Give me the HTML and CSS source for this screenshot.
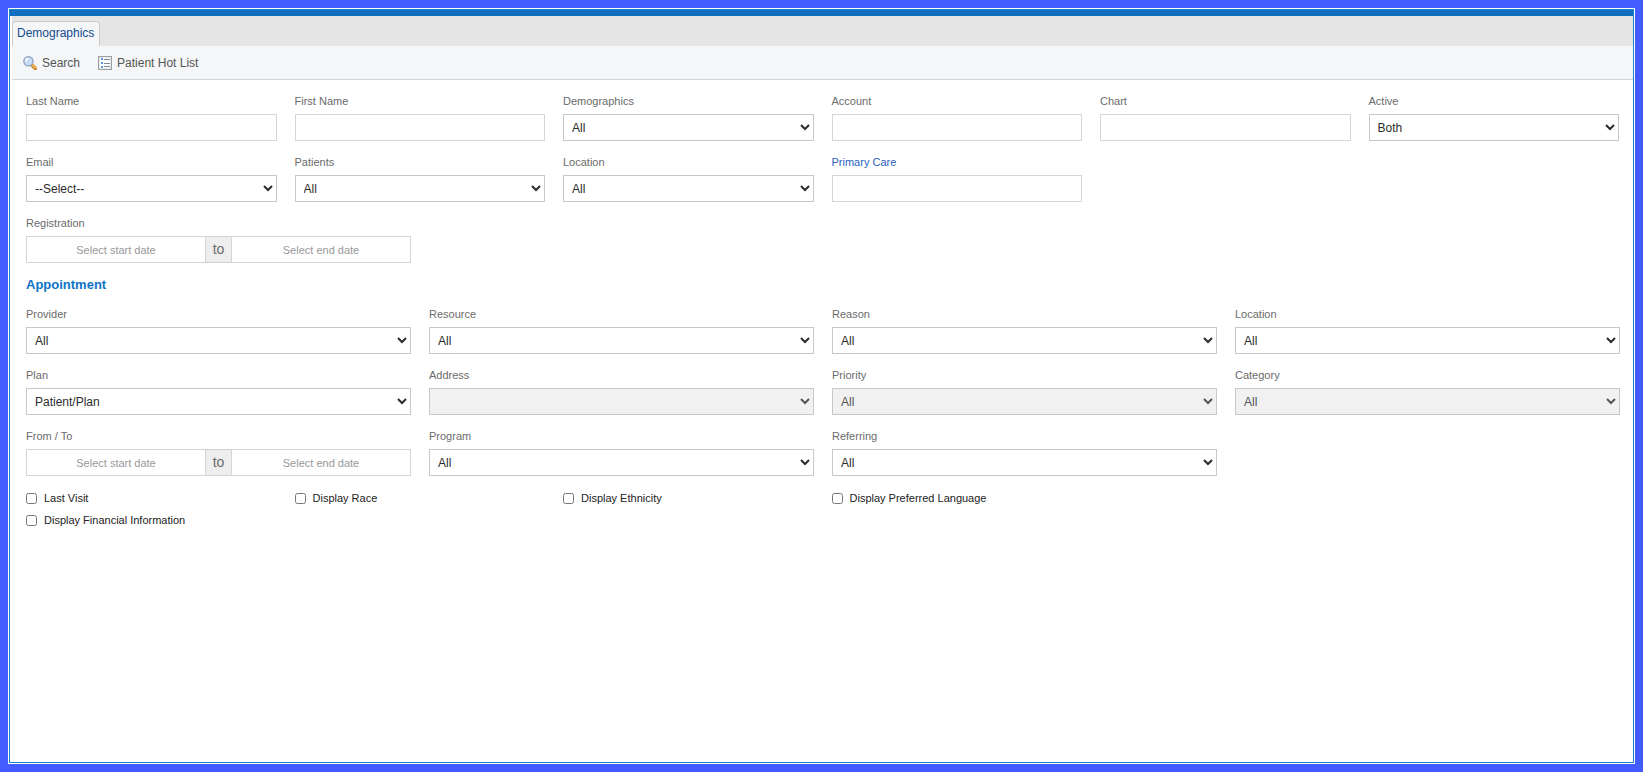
FILE: index.html
```html
<!DOCTYPE html>
<html lang="en">
<head>
<meta charset="utf-8">
<title>Demographics</title>
<link rel="stylesheet" href="styles.css">
</head>
<body>
<div class="window">
  <div class="title-bar"></div>
  <nav class="tabs"><button class="tab" type="button">Demographics</button></nav>
  <div class="toolbar">
    <button class="tool" type="button">
      <svg class="icon" viewBox="0 0 14 14" aria-hidden="true">
        <path d="M8.8 8.8 12.4 12.4" stroke="#c07f2c" stroke-width="3.6" stroke-linecap="round"/>
        <path d="M9.4 8.8 12.6 12" stroke="#f6b24a" stroke-width="2.2" stroke-linecap="round"/>
        <circle cx="5.4" cy="5.3" r="4.6" fill="#c5def7" stroke="#93a6c6" stroke-width="1.4"/>
        <path d="M2.8 5.2a2.8 2.8 0 0 1 2.8-2.7" fill="none" stroke="#fff" stroke-width="1.6"/>
      </svg>
      Search
    </button>
    <button class="tool" type="button">
      <svg class="icon" viewBox="0 0 14 14" aria-hidden="true">
        <rect x=".5" y=".5" width="13" height="13" fill="#fbfcfd" stroke="#9b9ea3" stroke-width="1.4"/>
        <path d="M3 3h2M3 7h2M3 11h2" stroke="#5a9ad6" stroke-width="2"/>
        <path d="M6 3.5h6M6 7.5h6M6 10.5h6" stroke="#83878c"/>
      </svg>
      Patient Hot List
    </button>
  </div>
  <form class="form">
    <div class="row six">
      <div class="field"><label for="last">Last Name</label><input class="control" id="last" type="text"></div>
      <div class="field"><label for="first">First Name</label><input class="control" id="first" type="text"></div>
      <div class="field"><label for="demo">Demographics</label><select class="control" id="demo"><option>All</option></select></div>
      <div class="field"><label for="account">Account</label><input class="control" id="account" type="text"></div>
      <div class="field"><label for="chart">Chart</label><input class="control" id="chart" type="text"></div>
      <div class="field"><label for="active">Active</label><select class="control" id="active"><option>Both</option></select></div>
    </div>
    <div class="row six">
      <div class="field"><label for="email">Email</label><select class="control" id="email"><option>--Select--</option></select></div>
      <div class="field"><label for="patients">Patients</label><select class="control" id="patients"><option>All</option></select></div>
      <div class="field"><label for="loc">Location</label><select class="control" id="loc"><option>All</option></select></div>
      <div class="field"><a class="lookup" id="care-label" href="#care">Primary Care</a><input class="control" id="care" type="text" aria-labelledby="care-label"></div>
    </div>
    <div class="row four">
      <div class="field"><label for="reg-start">Registration</label>
        <div class="range"><input class="control date" id="reg-start" type="text" placeholder="Select start date"><span class="to">to</span><input class="control date" type="text" placeholder="Select end date" aria-label="Registration end date"></div>
      </div>
    </div>
    <h2 class="heading">Appointment</h2>
    <div class="row four">
      <div class="field"><label for="provider">Provider</label><select class="control" id="provider"><option>All</option></select></div>
      <div class="field"><label for="resource">Resource</label><select class="control" id="resource"><option>All</option></select></div>
      <div class="field"><label for="reason">Reason</label><select class="control" id="reason"><option>All</option></select></div>
      <div class="field"><label for="aloc">Location</label><select class="control" id="aloc"><option>All</option></select></div>
    </div>
    <div class="row four">
      <div class="field"><label for="plan">Plan</label><select class="control" id="plan"><option>Patient/Plan</option></select></div>
      <div class="field"><label for="address">Address</label><select class="control" id="address" disabled></select></div>
      <div class="field"><label for="priority">Priority</label><select class="control" id="priority" disabled><option>All</option></select></div>
      <div class="field"><label for="category">Category</label><select class="control" id="category" disabled><option>All</option></select></div>
    </div>
    <div class="row four">
      <div class="field"><label for="from">From / To</label>
        <div class="range"><input class="control date" id="from" type="text" placeholder="Select start date"><span class="to">to</span><input class="control date" type="text" placeholder="Select end date" aria-label="Appointment end date"></div>
      </div>
      <div class="field"><label for="program">Program</label><select class="control" id="program"><option>All</option></select></div>
      <div class="field"><label for="referring">Referring</label><select class="control" id="referring"><option>All</option></select></div>
    </div>
    <div class="row six checks">
      <label class="check"><input type="checkbox">Last Visit</label>
      <label class="check"><input type="checkbox">Display Race</label>
      <label class="check"><input type="checkbox">Display Ethnicity</label>
      <label class="check"><input type="checkbox">Display Preferred Language</label>
      <label class="check full"><input type="checkbox">Display Financial Information</label>
    </div>
  </form>
</div>
</body>
</html>
```
FILE: styles.css
```css
* { box-sizing: border-box; }
body {
  margin: 0;
  padding: 8px;
  min-height: 100vh;
  display: flex;
  background: #425cff;
  font-family: "Liberation Sans", Arial, sans-serif;
  font-size: 12px;
}
button, input, select { font-family: inherit; font-size: inherit; }
.window {
  flex: 1;
  background: #fff;
  border: 1px solid #1c83cb;
  outline: 1px solid #fff;
  margin: 1px;
}
.title-bar { height: 6px; background: #106ebe; }
.tabs {
  display: flex;
  align-items: flex-end;
  height: 30px;
  margin-left: 2px;
  background: #e5e5e5;
}
.tab {
  height: 25px;
  padding: 0 5px 3px 4px;
  border: 1px solid #ccc;
  border-bottom: 0;
  border-radius: 4px 4px 0 0;
  background: #f4f6f8;
  color: #134a8e;
}
.toolbar {
  display: flex;
  gap: 18px;
  height: 34px;
  margin-left: 2px;
  padding-left: 11px;
  background: #f4f6f8;
  border-bottom: 1px solid #d3d5d7;
}
.tool {
  display: flex;
  align-items: center;
  gap: 5px;
  padding: 0;
  border: 0;
  background: none;
  color: #555;
}
.icon { width: 14px; height: 14px; }
.form {
  display: flex;
  flex-direction: column;
  gap: 13px;
  padding: 13px 13px 13px 16px;
}
.row { display: grid; column-gap: 18px; }
.six { grid-template-columns: repeat(6, minmax(0, 1fr)); padding-right: 1px; }
.four { grid-template-columns: repeat(4, minmax(0, 1fr)); }
.field {
  display: flex;
  flex-direction: column;
  gap: 5px;
  font-size: 11px;
  line-height: 16px;
  color: #6b6b6b;
}
.lookup { color: #2a5fc4; text-decoration: none; }
.control {
  width: 100%;
  height: 27px;
  margin: 0;
  padding: 0 8px;
  border: 1px solid #d5d5d5;
  border-radius: 0;
  background: #fff;
  font-size: 12px;
  color: #2b2b2b;
}
select.control { padding: 0 4px; border-color: #c8c8c8; }
.control:disabled { background: #f1f1f1; color: #555; opacity: 1; }
.range { display: flex; }
.date {
  flex: 1;
  min-width: 0;
  font-size: 11px;
  text-align: center;
}
.date::placeholder { color: #999; }
.to {
  width: 25px;
  border: solid #d0d0d0;
  border-width: 1px 0;
  background: #eee;
  font-size: 14px;
  line-height: 25px;
  text-align: center;
}
.heading {
  margin: 0;
  font-size: 13px;
  line-height: 17px;
  color: #0c74c4;
}
.checks { margin-top: -2px; }
.check {
  display: flex;
  align-items: center;
  gap: 7px;
  height: 22px;
  font-size: 11px;
  color: #222;
  white-space: nowrap;
}
.check input { width: 11px; height: 11px; margin: 0; }
.full { grid-column: 1 / -1; }
```
